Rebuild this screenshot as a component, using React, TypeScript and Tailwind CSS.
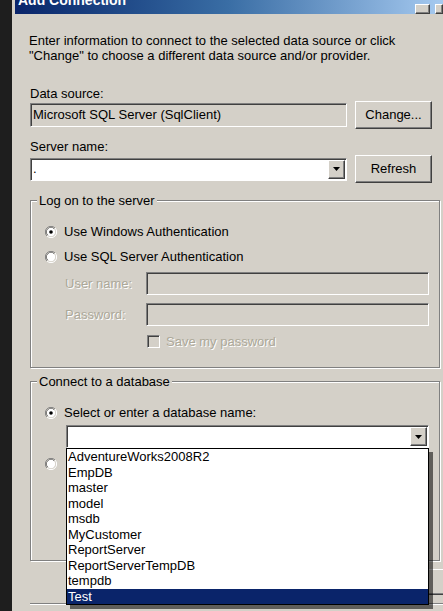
import React from "react";

const sunken =
  "border border-t-[#808080] border-l-[#808080] border-b-white border-r-white shadow-[inset_1px_1px_0_#404040]";
const raised =
  "border border-t-white border-l-white border-b-[#404040] border-r-[#404040] shadow-[inset_-1px_-1px_0_#808080]";

const Radio: React.FC<{ checked?: boolean }> = ({ checked }) => (
  <svg width="12" height="12" viewBox="0 0 12 12" className="shrink-0">
    <path d="M10 2 A5.5 5.5 0 0 0 2 10" fill="none" stroke="#808080" strokeWidth="1" />
    <path d="M9 3 A4.2 4.2 0 0 0 3 9" fill="none" stroke="#404040" strokeWidth="1" />
    <circle cx="6" cy="6" r="4.2" fill="#fff" />
    <path d="M2 10 A5.5 5.5 0 0 0 10 2" fill="none" stroke="#fff" strokeWidth="1" />
    {checked && <circle cx="6" cy="6" r="1.8" fill="#000" />}
  </svg>
);

const DropButton: React.FC = () => (
  <div className={`flex h-full w-[17px] items-center justify-center bg-[#d4d0c8] ${raised}`}>
    <svg width="7" height="4" viewBox="0 0 7 4">
      <path d="M0 0 H7 L3.5 4 Z" fill="#000" />
    </svg>
  </div>
);

const databases = [
  "AdventureWorks2008R2",
  "EmpDB",
  "master",
  "model",
  "msdb",
  "MyCustomer",
  "ReportServer",
  "ReportServerTempDB",
  "tempdb",
  "Test",
];

export default function App() {
  return (
    <div className="relative flex h-[611px] w-[443px] overflow-hidden bg-[#1c1c1c] font-['Liberation_Sans',Arial,sans-serif] text-[13px] text-black">
      <div className="w-[12px] shrink-0 bg-[#1e1e1e]" />
      <div className="flex w-[431px] shrink-0 flex-col bg-[#d4d0c8]">
        {/* title bar */}
        <div className="ml-[3px] flex h-[14px] shrink-0 items-start justify-between overflow-hidden bg-gradient-to-r from-[#0a246a] via-[#3a6ea5] to-[#a6caf0]">
          <span className="-mt-[7px] ml-[3px] text-[14px] font-bold leading-[15px] text-white">Add Connection</span>
          <div className="mt-[4px] flex gap-[5px]">
            <div className={`h-[10px] w-[15px] bg-[#d4d0c8] ${raised}`} />
            <div className={`h-[10px] w-[8px] bg-[#d4d0c8] ${raised}`} />
          </div>
        </div>

        <div className="flex flex-col pl-[18px] pr-0">
          <p className="ml-[-1px] mt-[19px] leading-[15px]">
            Enter information to connect to the selected data source or click
            <br />
            "Change" to choose a different data source and/or provider.
          </p>

          <div className="mt-[23px] h-[15px] leading-[15px]">Data source:</div>
          <div className="flex h-[28px] items-center gap-[8px]">
            <div className={`flex h-[24px] w-[317px] items-center bg-[#d4d0c8] pl-[2px] ${sunken}`}>
              Microsoft SQL Server (SqlClient)
            </div>
            <button className={`h-[28px] w-[77px] bg-[#d4d0c8] ${raised}`}>Change...</button>
          </div>

          <div className="mt-[10px] h-[15px] leading-[15px]">Server name:</div>
          <div className="mt-[1px] flex h-[28px] items-center gap-[8px]">
            <div className={`flex h-[23px] w-[317px] items-center bg-white p-[1px] pl-[2px] ${sunken}`}>
              <span className="flex-1">.</span>
              <DropButton />
            </div>
            <button className={`h-[28px] w-[77px] bg-[#d4d0c8] ${raised}`}>Refresh</button>
          </div>

          {/* Log on group */}
          <fieldset className="mt-[10px] w-[410px] border border-[#808080] shadow-[inset_1px_1px_0_#fff,1px_1px_0_#fff] pb-[18px]">
            <legend className="ml-[6px] bg-[#d4d0c8] px-[2px] leading-[15px]">Log on to the server</legend>
            <div className="mt-[16px] flex h-[16px] items-center gap-[7px] pl-[14px]">
              <Radio checked />
              <span>Use Windows Authentication</span>
            </div>
            <div className="mt-[9px] flex h-[16px] items-center gap-[7px] pl-[14px]">
              <Radio />
              <span>Use SQL Server Authentication</span>
            </div>
            <div className="mt-[7px] flex h-[23px] items-center pl-[34px] text-[#aca899] [text-shadow:1px_1px_0_#fff]">
              <span className="w-[81px]">User name:</span>
              <div className={`h-[23px] w-[283px] bg-[#d4d0c8] ${sunken}`} />
            </div>
            <div className="mt-[8px] flex h-[23px] items-center pl-[34px] text-[#aca899] [text-shadow:1px_1px_0_#fff]">
              <span className="w-[81px]">Password:</span>
              <div className={`h-[23px] w-[283px] bg-[#d4d0c8] ${sunken}`} />
            </div>
            <div className="mt-[8px] flex h-[15px] items-center gap-[6px] pl-[116px] text-[#aca899] [text-shadow:1px_1px_0_#fff]">
              <div className={`h-[13px] w-[13px] bg-[#d4d0c8] ${sunken}`} />
              <span>Save my password</span>
            </div>
          </fieldset>

          {/* Connect to database group */}
          <fieldset className="mt-[6px] h-[187px] w-[410px] border border-[#808080] shadow-[inset_1px_1px_0_#fff,1px_1px_0_#fff]">
            <legend className="ml-[6px] bg-[#d4d0c8] px-[2px] leading-[15px]">Connect to a database</legend>
            <div className="mt-[16px] flex h-[16px] items-center gap-[7px] pl-[14px]">
              <Radio checked />
              <span>Select or enter a database name:</span>
            </div>
            <div className={`ml-[35px] mt-[4px] flex h-[23px] w-[363px] items-center bg-white p-[1px] ${sunken}`}>
              <span className="flex-1" />
              <DropButton />
            </div>
            <div className="mt-[8px] flex h-[16px] items-center pl-[14px]">
              <Radio />
            </div>
          </fieldset>

          <div className="mt-[8px] flex h-[26px] justify-end">
            <div className={`mr-[-12px] h-[26px] w-[100px] bg-[#d4d0c8] ${raised}`} />
          </div>
          <div className="mt-[8px] h-[2px] border-t border-[#808080] bg-white" />
        </div>
      </div>

      {/* open dropdown list */}
      <div className="absolute left-[66px] top-[448px] w-[363px] border border-black bg-white shadow-[4px_4px_0_rgba(0,0,0,0.55)]">
        {databases.map((db) => (
          <div
            key={db}
            className={`h-[15.5px] pl-[1px] leading-[15.5px] ${db === "Test" ? "bg-[#0a246a] text-white" : ""}`}
          >
            {db}
          </div>
        ))}
      </div>
    </div>
  );
}
